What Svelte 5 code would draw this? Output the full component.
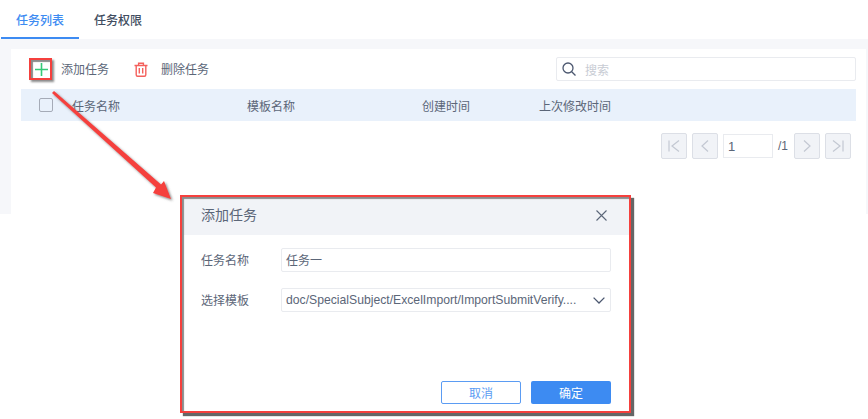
<script>
  const tabs = [
    { name: "任务列表", current: true },
    { name: "任务权限", current: false },
  ];
  const columns = ["任务名称", "模板名称", "创建时间", "上次修改时间"];
</script>

<div class="page">
  <nav class="tabs">
    {#each tabs as tab}
      <div class="tab" class:current={tab.current}>{tab.name}</div>
    {/each}
  </nav>

  <div class="content">
    <section class="panel">
      <div class="toolbar">
        <button type="button" class="tool add">
          <svg width="13" height="13" viewBox="0 0 13 13"><path d="M6.5 0v13M0 6.5h13" stroke="#35c978" stroke-width="1.6" fill="none" /></svg>
          <span>添加任务</span>
        </button>
        <button type="button" class="tool remove">
          <svg width="14" height="15" viewBox="0 0 14 15" fill="none" stroke="#f4605c" stroke-width="1.4">
            <path d="M.5 3.5h13M4.6 3.3V1.2h4.8v2.100M2.2 3.5v9.200c0 .9.5 1.500 1.400 1.500h6.800c.9 0 1.400-.6 1.400-1.500V3.500M5.300 6v5.600M8.700 6v5.600" />
          </svg>
          <span>删除任务</span>
        </button>
        <div class="search">
          <svg width="14" height="14" viewBox="0 0 14 14" fill="none" stroke="#4c5870" stroke-width="1.3"><circle cx="6" cy="6" r="5" /><path d="M9.7 9.7l3.800 3.800" /></svg>
          <span>搜索</span>
        </div>
      </div>

      <div class="table-head">
        <span class="checkbox"></span>
        {#each columns as col}
          <span class="col">{col}</span>
        {/each}
      </div>

      <div class="pager">
        <button type="button" class="page-btn" aria-label="first">
          <svg width="16" height="16" viewBox="0 0 16 16"><path d="M3 2.5v11M13 2.5L6 8l7 5.500" /></svg>
        </button>
        <button type="button" class="page-btn" aria-label="prev">
          <svg width="16" height="16" viewBox="0 0 16 16"><path d="M11 2.5L5 8l6 5.500" /></svg>
        </button>
        <div class="page-input">1</div>
        <span class="page-total">/1</span>
        <button type="button" class="page-btn" aria-label="next">
          <svg width="16" height="16" viewBox="0 0 16 16"><path d="M5 2.5L11 8l-6 5.500" /></svg>
        </button>
        <button type="button" class="page-btn" aria-label="last">
          <svg width="16" height="16" viewBox="0 0 16 16"><path d="M3 2.5L10 8l-7 5.500M13 2.500v11" /></svg>
        </button>
      </div>
    </section>
  </div>

  <div class="mark plus-mark"></div>

  <svg class="arrow" width="140" height="125" viewBox="0 0 140 125">
    <defs>
      <filter id="sh" x="-20%" y="-20%" width="140%" height="140%">
        <feDropShadow dx="1.5" dy="1.5" stdDeviation="0.8" flood-color="#555" flood-opacity="0.7" />
      </filter>
    </defs>
    <path
      d="M4 1L111 94.500L114 91L121 109L103 103L106 97.500L2 3Z"
      fill="#f5403d"
      filter="url(#sh)"
    />
  </svg>

  <div class="dialog">
    <header class="dialog-head">
      <span class="title">添加任务</span>
      <svg width="11" height="11" viewBox="0 0 11 11"><path d="M.5.5l10 10M10.500.5l-10 10" stroke="#5b6678" stroke-width="1.1" fill="none" /></svg>
    </header>
    <div class="dialog-body">
      <div class="field">
        <span class="label">任务名称</span>
        <div class="input">任务一</div>
      </div>
      <div class="field">
        <span class="label">选择模板</span>
        <div class="input select">
          <span>doc/SpecialSubject/ExcelImport/ImportSubmitVerify....</span>
          <svg width="12" height="7" viewBox="0 0 12 7"><path d="M.6.6L6 6l5.400-5.400" stroke="#4c5870" stroke-width="1.3" fill="none" /></svg>
        </div>
      </div>
    </div>
    <footer class="dialog-foot">
      <button type="button" class="btn ghost">取消</button>
      <button type="button" class="btn primary">确定</button>
    </footer>
  </div>

  <div class="mark dialog-mark"></div>
</div>

<style>
  :global(body) {
    margin: 0;
    background: #fff;
  }

  .page {
    position: relative;
    width: 868px;
    height: 419px;
    overflow: hidden;
    font-family: "Noto Sans CJK SC", "Liberation Sans", sans-serif;
    font-size: 12px;
    color: #5b6678;
  }

  button {
    font-family: inherit;
    font-size: inherit;
    color: inherit;
    background: none;
    border: 0;
    padding: 0;
    margin: 0;
  }

  .tabs {
    display: flex;
    height: 39px;
    padding-left: 1px;
    background: #fff;
    box-sizing: border-box;
    box-shadow: 0 1px 1px #eceef2;
  }

  .tab {
    width: 78px;
    height: 39px;
    box-sizing: border-box;
    text-align: center;
    line-height: 39px;
    font-weight: 500;
    color: #414d60;
  }

  .tab.current {
    color: #3d8bf2;
    border-bottom: 2px solid #3d8bf2;
  }

  .content {
    height: 175px;
    box-sizing: border-box;
    background: #f6f7fa;
    padding: 10px 2px 0 11px;
  }

  .panel {
    height: 165px;
    background: #fff;
    padding: 0 10px;
  }

  .toolbar {
    display: flex;
    align-items: center;
    height: 40px;
  }

  .tool {
    display: flex;
    align-items: center;
    gap: 13px;
    color: #5b6678;
  }

  .tool.add {
    margin-left: 14px;
  }

  .tool.remove {
    margin-left: 25px;
  }

  .tool span {
    margin-bottom: 2px;
  }

  .search {
    display: flex;
    align-items: center;
    gap: 9px;
    width: 300px;
    height: 24px;
    margin-left: auto;
    padding-left: 5px;
    box-sizing: border-box;
    border: 1px solid #e9ebef;
    border-radius: 2px;
    color: #c8ccd4;
  }

  .table-head {
    display: grid;
    grid-template-columns: 51px 175px 175px 117px 1fr;
    align-items: center;
    height: 32px;
    background: #e9f1fb;
  }

  .checkbox {
    width: 12px;
    height: 12px;
    margin-left: 18px;
    border: 1px solid #a5abb7;
    border-radius: 2px;
  }

  .pager {
    display: flex;
    align-items: center;
    justify-content: flex-end;
    gap: 5px;
    margin-top: 12px;
    padding-right: 5px;
  }

  .page-btn {
    display: flex;
    align-items: center;
    justify-content: center;
    width: 26px;
    height: 26px;
    box-sizing: border-box;
    border: 1px solid #dcdfe6;
    border-radius: 2px;
    background: #f1f3f7;
  }

  .page-btn svg {
    fill: none;
    stroke: #c3c8d2;
    stroke-width: 1.2;
  }

  .page-input {
    width: 50px;
    height: 24px;
    box-sizing: border-box;
    border: 1px solid #e9ebef;
    padding-left: 4px;
    line-height: 24px;
    background: #fff;
    font-family: "Liberation Sans", sans-serif;
    font-size: 13px;
  }

  .page-total {
    width: 11px;
    font-family: "Liberation Sans", sans-serif;
    font-size: 12px;
  }

  .mark {
    position: absolute;
    box-sizing: border-box;
    border: 2px solid #f5403d;
  }

  .plus-mark {
    left: 29px;
    top: 58px;
    width: 23px;
    height: 22px;
    box-shadow: inset 2px 2px 1px #8b8b8b, 2px 2px 2px #8b8b8b;
  }

  .arrow {
    position: absolute;
    left: 50px;
    top: 90px;
  }

  .dialog-mark {
    left: 180px;
    top: 195px;
    width: 451px;
    height: 218px;
    box-shadow: inset 2px 2px 1px #8b8b8b, 3px 3px 1px #666;
  }

  .dialog {
    position: absolute;
    left: 182px;
    top: 197px;
    width: 447px;
    height: 214px;
    display: flex;
    flex-direction: column;
    background: #fff;
  }

  .dialog-head {
    display: flex;
    align-items: center;
    justify-content: space-between;
    height: 38px;
    box-sizing: border-box;
    flex: none;
    padding: 0 22px 2px 19px;
    background: #f1f3f7;
    font-size: 14px;
  }

  .title {
    margin-bottom: 2px;
  }

  .dialog-body {
    display: flex;
    flex-direction: column;
    gap: 16px;
    padding: 13px 18px 0 19px;
    flex: 1;
  }

  .field {
    display: flex;
    align-items: center;
  }

  .label {
    width: 80px;
    flex: none;
    margin-bottom: 2px;
  }

  .input {
    flex: 1;
    height: 24px;
    line-height: 21px;
    padding-left: 4px;
    box-sizing: border-box;
    border: 1px solid #e9ebef;
    border-radius: 2px;
  }

  .select {
    display: flex;
    align-items: center;
    justify-content: space-between;
    padding-right: 5px;
    font-family: "Liberation Sans", sans-serif;
    font-size: 12.2px;
    white-space: nowrap;
    overflow: hidden;
  }

  .dialog-foot {
    display: flex;
    justify-content: flex-end;
    gap: 10px;
    padding: 0 18px 7px 0;
  }

  .btn {
    width: 80px;
    height: 23px;
    border-radius: 2px;
    box-sizing: border-box;
  }

  .ghost {
    border: 1px solid #5b9cf3;
    color: #5b9cf3;
    background: #fff;
  }

  .primary {
    background: #3d8bf2;
    color: #fff;
  }
</style>
